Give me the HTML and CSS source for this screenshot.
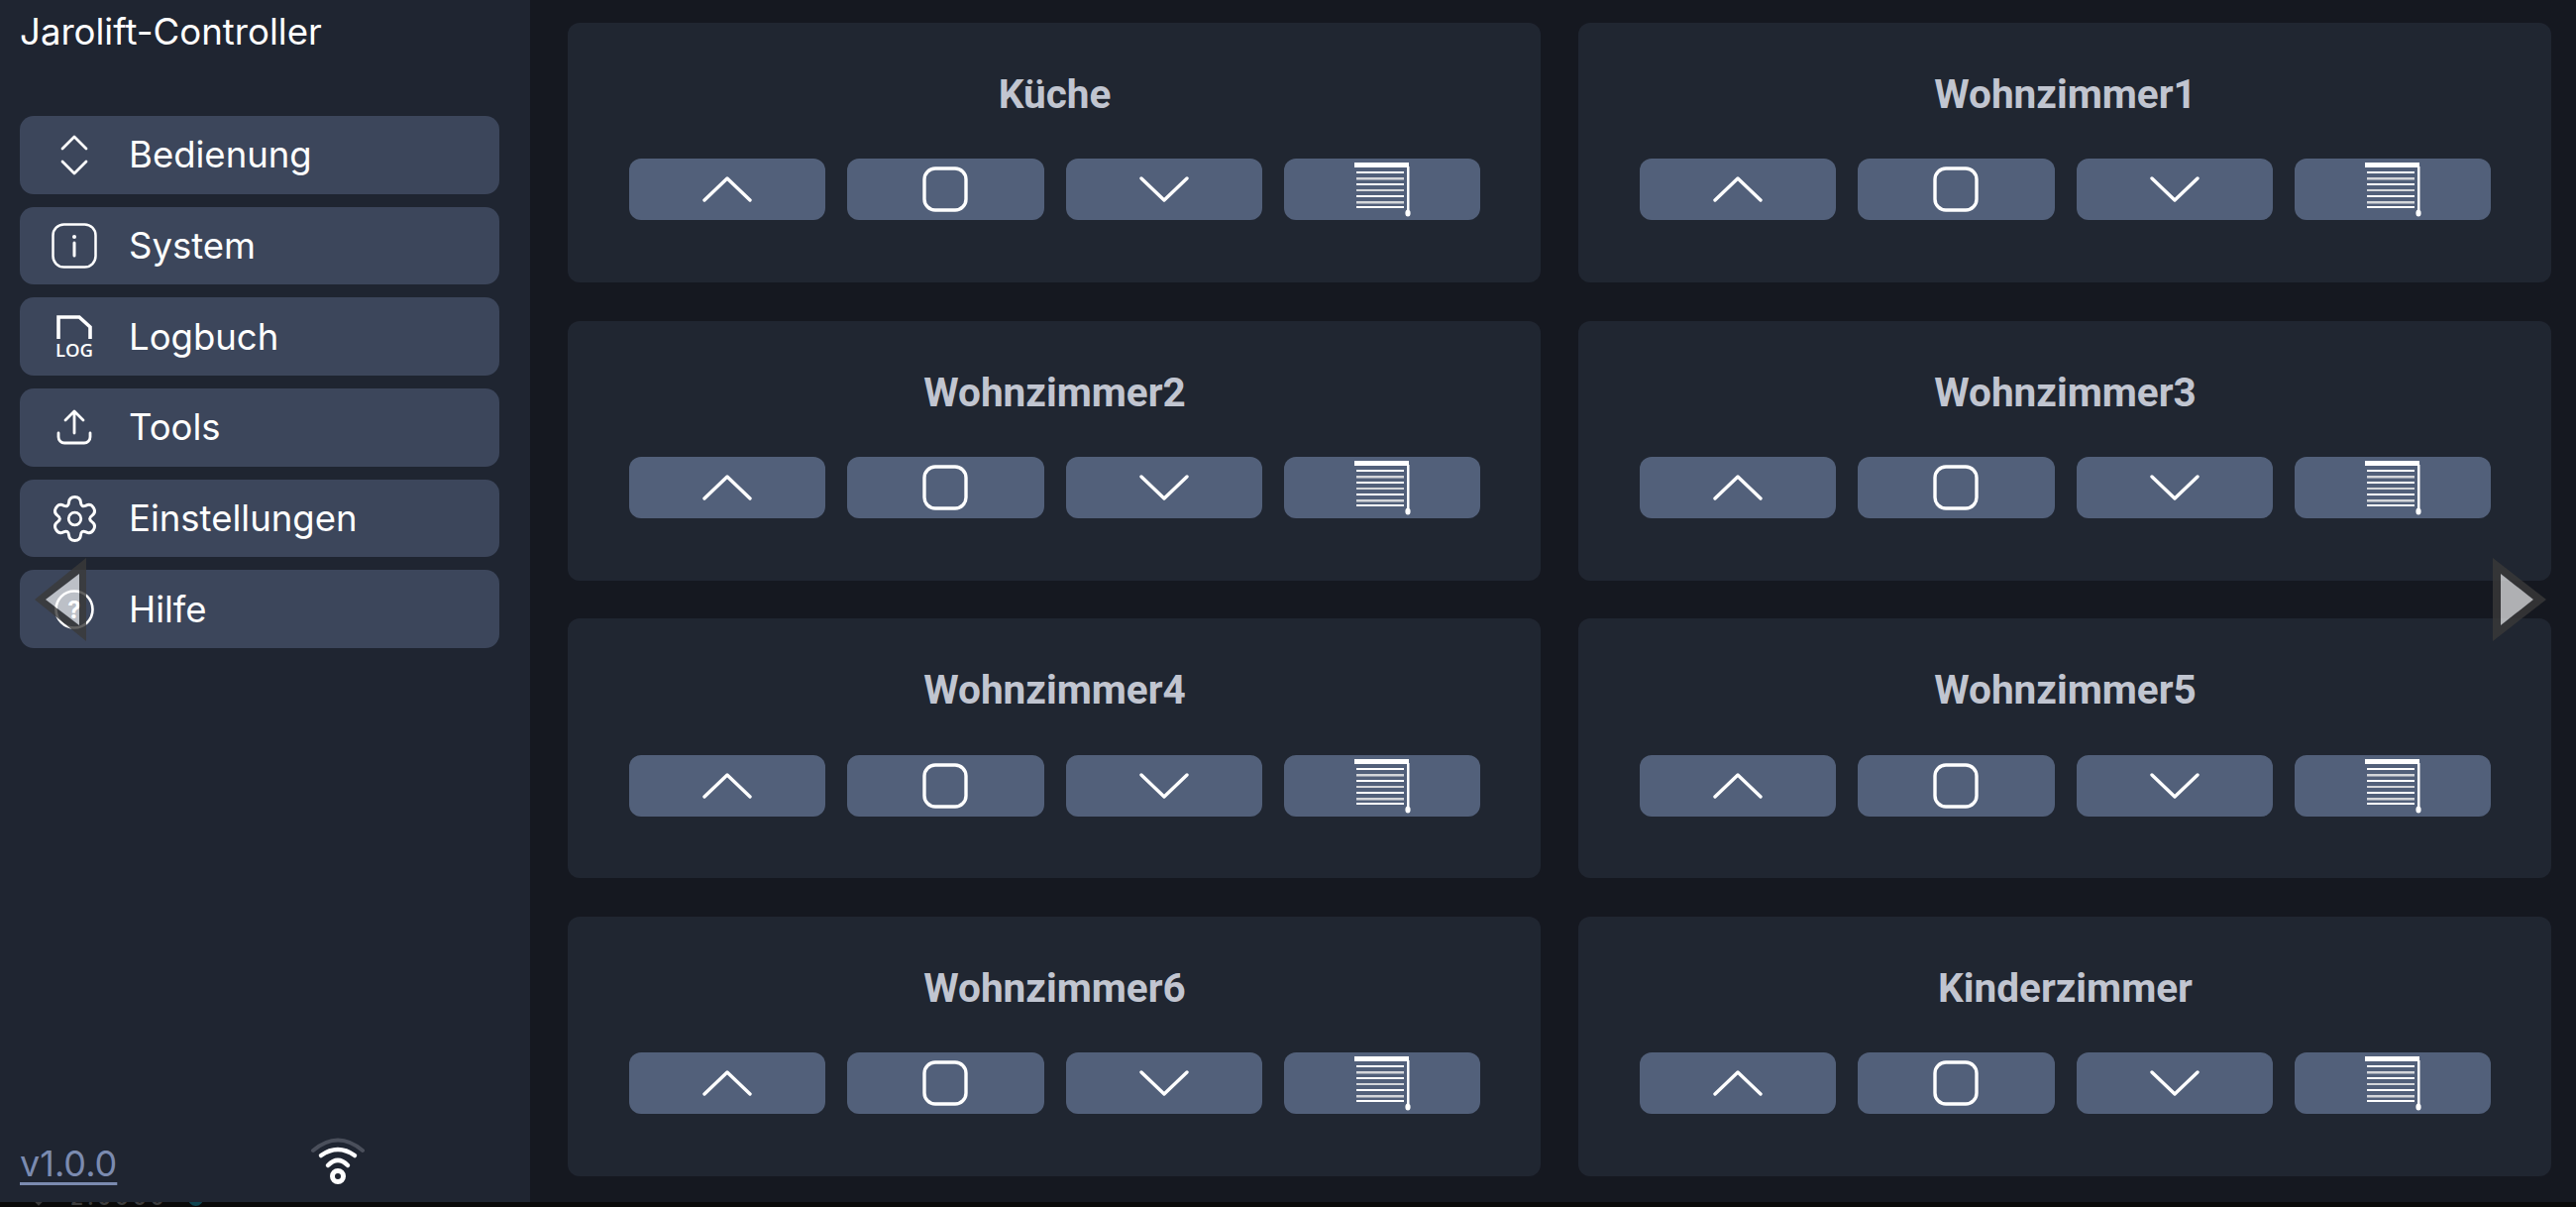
FILE: index.html
```html
<!DOCTYPE html>
<html lang="de">
<head>
<meta charset="utf-8">
<title>Jarolift-Controller</title>
<link rel="stylesheet" href="styles.css">
</head>
<body>
<svg class="defs" width="0" height="0" aria-hidden="true">
  <defs>
    <symbol id="i-up" viewBox="0 0 50 26"><path d="M2 24 25 2 48 24" fill="none" stroke="#fff" stroke-width="3.400" stroke-linecap="round" stroke-linejoin="round"/></symbol>
    <symbol id="i-down" viewBox="0 0 50 26"><path d="M2 2 25 24 48 2" fill="none" stroke="#fff" stroke-width="3.400" stroke-linecap="round" stroke-linejoin="round"/></symbol>
    <symbol id="i-stop" viewBox="0 0 46 46"><rect x="2" y="2" width="42" height="42" rx="11" fill="none" stroke="#fff" stroke-width="3.400"/></symbol>
    <symbol id="i-blind" viewBox="0 0 58 56">
      <path d="M1 1h55v5H1z" fill="#fff"/>
      <path d="M54 5h2.500v44H54z" fill="#fff"/>
      <ellipse cx="55" cy="52" rx="2.600" ry="3.600" fill="#fff"/>
      <path d="M3 10h48v2H3zM3 22h48v2H3zM3 34h48v2H3zM3 45h48v2H3z" fill="#fff"/>
      <path d="M3 16h48v2.400H3zM3 28h48v2H3zM3 40h48v2.400H3z" fill="#d4d6da"/>
    </symbol>
  </defs>
</svg>
<div class="app">
  <aside class="sidebar">
    <div class="brand">Jarolift-Controller</div>
    <nav class="nav">
      <a class="nav-item">
        <span class="nav-icon"><svg width="28" height="42" viewBox="0 0 28 42"><path d="M2 15 14 3 26 15M2 28 14 40 26 28" fill="none" stroke="#fff" stroke-width="2.800" stroke-linecap="round" stroke-linejoin="round"/></svg></span>
        <span>Bedienung</span>
      </a>
      <a class="nav-item">
        <span class="nav-icon"><svg width="46" height="46" viewBox="0 0 46 46"><rect x="1.500" y="1.500" width="43" height="43" rx="11" fill="none" stroke="#fff" stroke-width="2.500"/><circle cx="23" cy="14" r="2" fill="#fff"/><path d="M23 20v13" stroke="#fff" stroke-width="3" stroke-linecap="round"/></svg></span>
        <span>System</span>
      </a>
      <a class="nav-item">
        <span class="nav-icon"><svg width="40" height="54" viewBox="0 0 40 54"><path d="M4 29V7H25L36 17V29" fill="none" stroke="#fff" stroke-width="3.600"/><text class="log-text" x="20" y="47" text-anchor="middle">LOG</text></svg></span>
        <span>Logbuch</span>
      </a>
      <a class="nav-item">
        <span class="nav-icon"><svg width="36" height="36" viewBox="0 0 36 36"><path d="M18 24V3M9 11l9-9 9 9" fill="none" stroke="#fff" stroke-width="2.800" stroke-linecap="round" stroke-linejoin="round"/><path d="M2 24v4a6 6 0 0 0 6 6h20a6 6 0 0 0 6-6v-4" fill="none" stroke="#fff" stroke-width="2.800" stroke-linecap="round"/></svg></span>
        <span>Tools</span>
      </a>
      <a class="nav-item">
        <span class="nav-icon"><svg width="47" height="49" viewBox="-1.500 -1.500 51 51"><path d="M17.530 6.050Q18.070 .23 24 .23Q29.930 .23 30.470 6.050Q31 11.880 36.310 9.430Q41.620 6.980 44.590 12.110Q47.550 17.250 42.780 20.630Q38 24 42.780 27.380Q47.550 30.750 44.590 35.890Q41.620 41.020 36.310 38.570Q31 36.120 30.470 41.950Q29.930 47.770 24 47.770Q18.070 47.770 17.530 41.950Q17 36.120 11.690 38.570Q6.380 41.020 3.420 35.890Q.45 30.750 5.220 27.380Q10 24 5.220 20.630Q.45 17.250 3.420 12.110Q6.380 6.980 11.690 9.430Q17 11.880 17.530 6.050Z" fill="none" stroke="#fff" stroke-width="3.200"/><circle cx="24" cy="24" r="6.800" fill="none" stroke="#fff" stroke-width="3"/></svg></span>
        <span>Einstellungen</span>
      </a>
      <a class="nav-item">
        <span class="nav-icon"><svg width="42" height="42" viewBox="0 0 42 42"><circle cx="21" cy="21" r="18.500" fill="none" stroke="#fff" stroke-width="2.600"/><text class="help-text" x="21" y="29.500" text-anchor="middle">?</text></svg></span>
        <span>Hilfe</span>
      </a>
    </nav>
    <div class="side-foot">
      <a class="version">v1.0.0</a>
      <svg class="wifi" width="56" height="50" viewBox="0 0 56 50">
        <path d="M3 15Q28 -6 53 15" fill="none" stroke="#4a4f5b" stroke-width="4" stroke-linecap="round"/>
        <path d="M11 20Q28 8 45 20" fill="none" stroke="#fff" stroke-width="4.500" stroke-linecap="round"/>
        <path d="M18 30Q28 20 38 30" fill="none" stroke="#fff" stroke-width="4.500" stroke-linecap="round"/>
        <circle cx="28" cy="41" r="5.500" fill="none" stroke="#fff" stroke-width="5"/>
      </svg>
    </div>
  </aside>
  <main class="grid">
    <section class="card"><h2>Küche</h2><div class="btns"><button class="btn"><svg class="ic-chev"><use href="#i-up"/></svg></button><button class="btn"><svg class="ic-stop"><use href="#i-stop"/></svg></button><button class="btn"><svg class="ic-chev"><use href="#i-down"/></svg></button><button class="btn"><svg class="ic-blind"><use href="#i-blind"/></svg></button></div></section>
    <section class="card"><h2>Wohnzimmer1</h2><div class="btns"><button class="btn"><svg class="ic-chev"><use href="#i-up"/></svg></button><button class="btn"><svg class="ic-stop"><use href="#i-stop"/></svg></button><button class="btn"><svg class="ic-chev"><use href="#i-down"/></svg></button><button class="btn"><svg class="ic-blind"><use href="#i-blind"/></svg></button></div></section>
    <section class="card"><h2>Wohnzimmer2</h2><div class="btns"><button class="btn"><svg class="ic-chev"><use href="#i-up"/></svg></button><button class="btn"><svg class="ic-stop"><use href="#i-stop"/></svg></button><button class="btn"><svg class="ic-chev"><use href="#i-down"/></svg></button><button class="btn"><svg class="ic-blind"><use href="#i-blind"/></svg></button></div></section>
    <section class="card"><h2>Wohnzimmer3</h2><div class="btns"><button class="btn"><svg class="ic-chev"><use href="#i-up"/></svg></button><button class="btn"><svg class="ic-stop"><use href="#i-stop"/></svg></button><button class="btn"><svg class="ic-chev"><use href="#i-down"/></svg></button><button class="btn"><svg class="ic-blind"><use href="#i-blind"/></svg></button></div></section>
    <section class="card"><h2>Wohnzimmer4</h2><div class="btns"><button class="btn"><svg class="ic-chev"><use href="#i-up"/></svg></button><button class="btn"><svg class="ic-stop"><use href="#i-stop"/></svg></button><button class="btn"><svg class="ic-chev"><use href="#i-down"/></svg></button><button class="btn"><svg class="ic-blind"><use href="#i-blind"/></svg></button></div></section>
    <section class="card"><h2>Wohnzimmer5</h2><div class="btns"><button class="btn"><svg class="ic-chev"><use href="#i-up"/></svg></button><button class="btn"><svg class="ic-stop"><use href="#i-stop"/></svg></button><button class="btn"><svg class="ic-chev"><use href="#i-down"/></svg></button><button class="btn"><svg class="ic-blind"><use href="#i-blind"/></svg></button></div></section>
    <section class="card"><h2>Wohnzimmer6</h2><div class="btns"><button class="btn"><svg class="ic-chev"><use href="#i-up"/></svg></button><button class="btn"><svg class="ic-stop"><use href="#i-stop"/></svg></button><button class="btn"><svg class="ic-chev"><use href="#i-down"/></svg></button><button class="btn"><svg class="ic-blind"><use href="#i-blind"/></svg></button></div></section>
    <section class="card"><h2>Kinderzimmer</h2><div class="btns"><button class="btn"><svg class="ic-chev"><use href="#i-up"/></svg></button><button class="btn"><svg class="ic-stop"><use href="#i-stop"/></svg></button><button class="btn"><svg class="ic-chev"><use href="#i-down"/></svg></button><button class="btn"><svg class="ic-blind"><use href="#i-blind"/></svg></button></div></section>
  </main>
</div>
<div class="under-strip"><span class="under-mark"></span><span class="under-text">2.0000</span><span class="under-dot"></span></div>
<svg class="arrow arrow-left" width="52" height="84" viewBox="0 0 52 84"><path fill-rule="evenodd" d="M0 42 52 0v84zM11 42 45 68V16z" fill="#3a3a3a" fill-opacity=".8"/><path d="M11 42 45 16v52z" fill="#fff" fill-opacity=".66"/></svg>
<svg class="arrow arrow-right" width="54" height="84" viewBox="0 0 54 84"><path fill-rule="evenodd" d="M54 42 0 0v84zM41 42 8 68V16z" fill="#3a3a3a" fill-opacity=".8"/><path d="M41 42 8 16v52z" fill="#fff" fill-opacity=".66"/></svg>
</body>
</html>
```
FILE: styles.css
```css
* { box-sizing: border-box; }
html, body { margin: 0; padding: 0; height: 100%; background: #0a0a0a; overflow: hidden; }
body { font-family: Inter, "Liberation Sans", sans-serif; color: #fff; position: relative; }
.defs { position: absolute; }
.app { display: flex; height: 1213px; }
.sidebar { width: 535px; flex: none; background: #1f2531; padding: 0 31px 0 20px; display: flex; flex-direction: column; }
.brand { font-size: 36.600px; line-height: 44px; height: 117px; padding-top: 10px; color: #fff; }
.nav { display: flex; flex-direction: column; gap: 13.200px; }
.nav-item { height: 78.500px; background: #3c465b; border-radius: 14px; display: flex; align-items: center; color: #fff; font-size: 36.500px; }
.nav-icon { width: 110px; flex: none; display: flex; justify-content: center; }
.side-foot { margin-top: auto; height: 67px; display: flex; align-items: flex-start; }
.version { font-size: 36px; line-height: 44px; margin-top: 6px; color: #7b8bb0; text-decoration: underline; text-decoration-thickness: 3px; text-underline-offset: 6px; }
.wifi { margin-left: 195px; }
.log-text { font: 600 18.500px "Open Sans", sans-serif; fill: #fff; }
.help-text { font: 700 24px Inter, sans-serif; fill: #fff; }
.grid { flex: 1; background: #151820; display: grid; grid-template-columns: 982px 982px; grid-auto-rows: 262px; column-gap: 38px; row-gap: 38.700px; padding: 23px 0 0 38px; }
.card { background: #202631; border-radius: 12px; padding: 0 61px 0 62px; display: flex; flex-direction: column; }
.card h2 { margin: 0; height: 137.200px; padding-top: 49px; font-size: 40.500px; line-height: 46px; font-weight: 700; font-family: Roboto, Inter, sans-serif; text-align: center; color: #c1c5d0; }
.btns { display: grid; grid-template-columns: repeat(4, 1fr); column-gap: 22px; }
.btn { height: 62px; padding: 0; border: 0; background: #52607a; border-radius: 12px; display: flex; align-items: center; justify-content: center; }
.ic-chev { width: 50px; height: 26px; }
.ic-stop { width: 46px; height: 46px; }
.ic-blind { width: 58px; height: 56px; }
.under-strip { height: 5px; overflow: hidden; display: flex; align-items: flex-end; padding-left: 30px; }
.under-mark { width: 18px; height: 18px; margin-bottom: 5px; background: #3a3a3a; transform: rotate(45deg); flex: none; }
.under-text { font-size: 21px; line-height: 21px; font-weight: 600; letter-spacing: 4px; margin: 0 0 -1.300px 23px; color: #3d3d3d; flex: none; }
.under-dot { width: 15px; height: 15px; border-radius: 50%; margin: 0 0 1.500px 20px; background: #0e4450; flex: none; }
.arrow { position: absolute; top: 563px; }
.arrow-left { left: 35px; }
.arrow-right { left: 2516px; }
```
